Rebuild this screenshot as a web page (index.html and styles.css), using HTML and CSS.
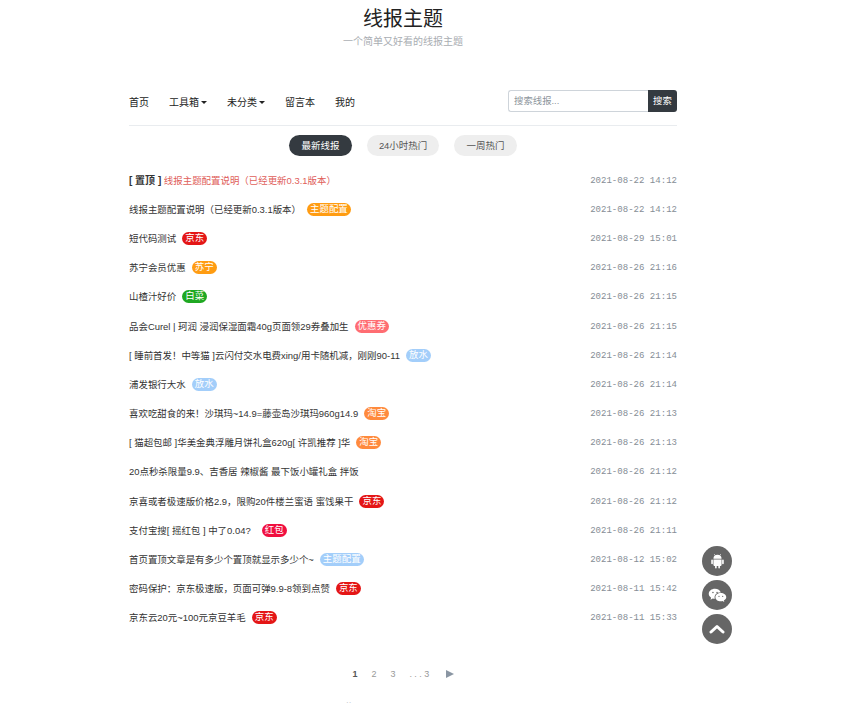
FILE: index.html
```html
<!DOCTYPE html>
<html lang="zh-CN">

<head>
  <meta charset="UTF-8">
  <title>线报主题</title>
  <link rel="stylesheet" href="styles.css">
</head>

<body>
  <div class="g-wrap">
    <div class="head">
      <h1 class="title">线报主题</h1>
      <p class="desc">一个简单又好看的线报主题</p>
    </div>
    <div class="nav">
      <ul class="menu">
        <li class="menu-item">首页</li>
        <li class="menu-item drop">工具箱</li>
        <li class="menu-item drop">未分类</li>
        <li class="menu-item">留言本</li>
        <li class="menu-item">我的</li>
      </ul>
      <div class="search">
        <input type="text" class="search-inp" placeholder="搜索线报...">
        <span class="search-btn">搜索</span>
      </div>
    </div>
    <div class="tabs">
      <span class="tab tab-on">最新线报</span>
      <span class="tab">24小时热门</span>
      <span class="tab">一周热门</span>
    </div>
    <ul class="list">
      <li class="row"><span class="name"><b class="top">[ 置顶 ]</b> <span class="hot">线报主题配置说明（已经更新0.3.1版本）</span></span><span class="time">2021-08-22 14:12</span></li>
      <li class="row"><span class="name">线报主题配置说明（已经更新0.3.1版本）<i class="tag orange">主题配置</i></span><span class="time">2021-08-22 14:12</span></li>
      <li class="row"><span class="name">短代码测试<i class="tag red">京东</i></span><span class="time">2021-08-29 15:01</span></li>
      <li class="row"><span class="name">苏宁会员优惠<i class="tag orange">苏宁</i></span><span class="time">2021-08-26 21:16</span></li>
      <li class="row"><span class="name">山楂汁好价<i class="tag green">白菜</i></span><span class="time">2021-08-26 21:15</span></li>
      <li class="row"><span class="name">品会Curel | 珂润 浸润保湿面霜40g页面领29券叠加生<i class="tag pink">优惠券</i></span><span class="time">2021-08-26 21:15</span></li>
      <li class="row"><span class="name">[ 睡前首发！中等猫 ]云闪付交水电费xing/用卡随机减，刚刚90-11<i class="tag blue">放水</i></span><span class="time">2021-08-26 21:14</span></li>
      <li class="row"><span class="name">浦发银行大水<i class="tag blue">放水</i></span><span class="time">2021-08-26 21:14</span></li>
      <li class="row"><span class="name">喜欢吃甜食的来！沙琪玛~14.9=藤壶岛沙琪玛960g14.9<i class="tag tb">淘宝</i></span><span class="time">2021-08-26 21:13</span></li>
      <li class="row"><span class="name">[ 猫超包邮 ]华美金典浮雕月饼礼盒620g[ 许凯推荐 ]华<i class="tag tb">淘宝</i></span><span class="time">2021-08-26 21:13</span></li>
      <li class="row"><span class="name">20点秒杀限量9.9、吉香居 辣椒酱 最下饭小罐礼盒 拌饭</span><span class="time">2021-08-26 21:12</span></li>
      <li class="row"><span class="name">京喜或者极速版价格2.9，限购20件楼兰蜜语 蜜饯果干<i class="tag red">京东</i></span><span class="time">2021-08-26 21:12</span></li>
      <li class="row"><span class="name">支付宝搜[ 摇红包 ] 中了0.04?<i class="tag rose wide">红包</i></span><span class="time">2021-08-26 21:11</span></li>
      <li class="row"><span class="name">首页置顶文章是有多少个置顶就显示多少个~<i class="tag blue">主题配置</i></span><span class="time">2021-08-12 15:02</span></li>
      <li class="row"><span class="name">密码保护：京东极速版，页面可弹9.9-8领到点赞<i class="tag red">京东</i></span><span class="time">2021-08-11 15:42</span></li>
      <li class="row"><span class="name">京东云20元~100元京豆羊毛<i class="tag red">京东</i></span><span class="time">2021-08-11 15:33</span></li>
    </ul>
    <div class="pager">
      <span class="page page-on">1</span>
      <span class="page">2</span>
      <span class="page">3</span>
      <span class="page page-more">...3</span>
      <span class="page-next"></span>
    </div>
    <div class="foot">··</div>
  </div>
  <div class="side">
    <span class="side-btn">
      <svg width="13" height="16" viewBox="0 0 16 18"><path fill="#fff" d="M3 6.200a5 5 0 0 1 10 0zM3 7h10v7a1 1 0 0 1-1 1h-1v2.200a1 1 0 0 1-2 0V15H7v2.200a1 1 0 0 1-2 0V15H4a1 1 0 0 1-1-1zM1.300 7a1 1 0 0 1 1 1v4a1 1 0 0 1-2 0V8a1 1 0 0 1 1-1zM14.700 7a1 1 0 0 1 1 1v4a1 1 0 0 1-2 0V8a1 1 0 0 1 1-1z"/><path stroke="#fff" stroke-width=".8" d="M5 2 4 .5M11 2l1-1.500"/></svg>
    </span>
    <span class="side-btn">
      <svg width="19" height="15" viewBox="0 0 22 18"><path fill="#fff" d="M8 1C3.800 1 .5 3.700.5 7c0 1.900 1.100 3.500 2.800 4.600L2.600 14l2.700-1.400c.8.200 1.600.4 2.500.4-.2-.6-.3-1.200-.3-1.800C7.500 8 10.500 5.500 14.300 5.500h.7C14.200 2.900 11.400 1 8 1z"/><path fill="#fff" d="M21.500 11c0-2.800-2.900-5-6.500-5s-6.500 2.200-6.500 5 2.900 5 6.500 5c.7 0 1.400-.1 2-.3l2.200 1.200-.6-2c1.800-.9 2.900-2.300 2.900-3.900z"/><circle cx="5.500" cy="5.500" r=".9" fill="#666"/><circle cx="10.500" cy="5.500" r=".9" fill="#666"/><circle cx="12.800" cy="10" r=".8" fill="#666"/><circle cx="17.200" cy="10" r=".8" fill="#666"/></svg>
    </span>
    <span class="side-btn">
      <svg width="16" height="10" viewBox="0 0 16 10"><path fill="none" stroke="#fff" stroke-width="3" stroke-linecap="round" stroke-linejoin="round" d="M2 8l6-5.500L14 8"/></svg>
    </span>
  </div>
</body>

</html>
```

FILE: styles.css
```css
* {
  margin: 0;
  padding: 0;
  box-sizing: border-box;
}

html,
body {
  height: 100%;
  overflow: hidden;
}

body {
  font-family: "Liberation Sans", "Noto Sans CJK SC", sans-serif;
  font-size: 9.45px;
  color: #333;
  background-color: #fff;
}

ul {
  list-style: none;
}

.g-wrap {
  width: 548px;
  margin-left: 129px;
}

.head {
  height: 90px;
  padding-top: 5px;
  text-align: center;
}

.title {
  font-size: 20px;
  line-height: 28px;
  font-weight: 400;
  color: #222;
}

.desc {
  margin-top: 2px;
  font-size: 10px;
  line-height: 14px;
  color: #a9adb2;
}

.nav {
  display: flex;
  align-items: center;
  justify-content: space-between;
  height: 36px;
  padding-bottom: 14px;
  border-bottom: 1px solid #e9ecef;
}

.menu {
  display: flex;
  gap: 20px;
  padding-top: 2px;
  font-size: 10px;
  color: #222;
}

.drop:after {
  content: '';
  display: inline-block;
  margin-left: 2px;
  vertical-align: 2px;
  border: 3px solid transparent;
  border-top-color: #222;
  border-bottom: none;
}

.search {
  display: flex;
  width: 169px;
  height: 22px;
}

.search-inp {
  flex: 1;
  min-width: 0;
  padding-left: 5px;
  border: 1px solid #ced4da;
  border-right: none;
  border-radius: 3px 0 0 3px;
  outline: none;
  font-family: inherit;
  font-size: 9.4px;
}

.search-inp::placeholder {
  color: #8d959c;
}

.search-btn {
  width: 29px;
  line-height: 22px;
  text-align: center;
  font-size: 9.4px;
  color: #fff;
  background-color: #343a40;
  border-radius: 0 3px 3px 0;
}

.tabs {
  display: flex;
  justify-content: center;
  gap: 15px;
  margin-top: 9px;
}

.tab {
  width: 63px;
  height: 21px;
  line-height: 21px;
  text-align: center;
  color: #555;
  background-color: #eee;
  border-radius: 11px;
}

.tab:nth-child(2) {
  width: 72px;
}

.tab-on {
  color: #fff;
  background-color: #343a40;
}

.list {
  margin-top: 10px;
}

.row {
  display: flex;
  align-items: center;
  justify-content: space-between;
  height: 29.2px;
  line-height: 14px;
}

.top {
  font-size: 10px;
  color: #333;
}

.hot {
  color: #e0605a;
}

.time {
  font-family: "Liberation Mono", monospace;
  font-size: 9.05px;
  color: #868e96;
}

.tag {
  display: inline-block;
  margin-left: 6px;
  padding: 0 3px;
  min-width: 25px;
  height: 13px;
  line-height: 12px;
  vertical-align: 1px;
  text-align: center;
  font-style: normal;
  color: #fff;
  border-radius: 7px;
}

.orange {
  background-color: #ff9c12;
}

.red {
  background-color: #e41616;
}

.green {
  background-color: #1fa822;
}

.pink {
  background-color: #ff6d72;
}

.blue {
  background-color: #a3cefa;
}

.tb {
  background-color: #ff8a3d;
}

.rose {
  background-color: #f00f3f;
}

.wide {
  margin-left: 11px;
}

.pager {
  display: flex;
  align-items: center;
  justify-content: center;
  gap: 14px;
  margin-top: 34px;
  height: 14px;
  font-size: 9px;
  color: #999;
}

.page-on {
  font-weight: 700;
  color: #555;
}

.page-more {
  letter-spacing: 2.4px;
}

.page-next {
  border: 4px solid transparent;
  border-left: 8px solid #8a96a3;
  border-right: none;
}

.foot {
  margin: 17px 0 0 217px;
  font-size: 8px;
  line-height: 10px;
  color: #bbb;
}

.side {
  position: fixed;
  left: 702px;
  top: 546px;
  display: flex;
  flex-direction: column;
  gap: 4px;
}

.side-btn {
  display: flex;
  align-items: center;
  justify-content: center;
  width: 30px;
  height: 30px;
  border-radius: 50%;
  background-color: #666;
}
```
